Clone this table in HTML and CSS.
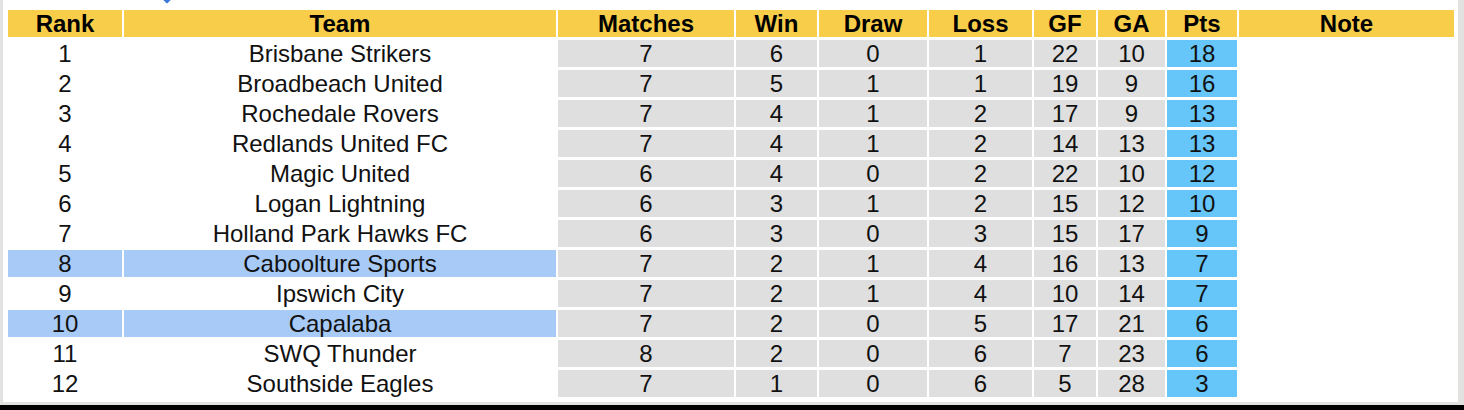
FILE: index.html
```html
<!DOCTYPE html>
<html>
<head>
<meta charset="utf-8">
<link rel="stylesheet" href="styles.css">
</head>
<body>
<div class="frame">
  <span class="marker"></span>
  <table class="standings">
    <colgroup>
      <col class="c-rank"><col class="c-team"><col class="c-m"><col class="c-w"><col class="c-d"><col class="c-l"><col class="c-gf"><col class="c-ga"><col class="c-pts"><col class="c-note">
    </colgroup>
    <thead>
      <tr><th>Rank</th><th>Team</th><th>Matches</th><th>Win</th><th>Draw</th><th>Loss</th><th>GF</th><th>GA</th><th>Pts</th><th>Note</th></tr>
    </thead>
    <tbody>
      <tr><td>1</td><td>Brisbane Strikers</td><td class="g">7</td><td class="g">6</td><td class="g">0</td><td class="g">1</td><td class="g">22</td><td class="g">10</td><td class="p">18</td><td></td></tr>
      <tr><td>2</td><td>Broadbeach United</td><td class="g">7</td><td class="g">5</td><td class="g">1</td><td class="g">1</td><td class="g">19</td><td class="g">9</td><td class="p">16</td><td></td></tr>
      <tr><td>3</td><td>Rochedale Rovers</td><td class="g">7</td><td class="g">4</td><td class="g">1</td><td class="g">2</td><td class="g">17</td><td class="g">9</td><td class="p">13</td><td></td></tr>
      <tr><td>4</td><td>Redlands United FC</td><td class="g">7</td><td class="g">4</td><td class="g">1</td><td class="g">2</td><td class="g">14</td><td class="g">13</td><td class="p">13</td><td></td></tr>
      <tr><td>5</td><td>Magic United</td><td class="g">6</td><td class="g">4</td><td class="g">0</td><td class="g">2</td><td class="g">22</td><td class="g">10</td><td class="p">12</td><td></td></tr>
      <tr><td>6</td><td>Logan Lightning</td><td class="g">6</td><td class="g">3</td><td class="g">1</td><td class="g">2</td><td class="g">15</td><td class="g">12</td><td class="p">10</td><td></td></tr>
      <tr><td>7</td><td>Holland Park Hawks FC</td><td class="g">6</td><td class="g">3</td><td class="g">0</td><td class="g">3</td><td class="g">15</td><td class="g">17</td><td class="p">9</td><td></td></tr>
      <tr class="hl"><td>8</td><td>Caboolture Sports</td><td class="g">7</td><td class="g">2</td><td class="g">1</td><td class="g">4</td><td class="g">16</td><td class="g">13</td><td class="p">7</td><td class="note"></td></tr>
      <tr><td>9</td><td>Ipswich City</td><td class="g">7</td><td class="g">2</td><td class="g">1</td><td class="g">4</td><td class="g">10</td><td class="g">14</td><td class="p">7</td><td></td></tr>
      <tr class="hl"><td>10</td><td>Capalaba</td><td class="g">7</td><td class="g">2</td><td class="g">0</td><td class="g">5</td><td class="g">17</td><td class="g">21</td><td class="p">6</td><td class="note"></td></tr>
      <tr><td>11</td><td>SWQ Thunder</td><td class="g">8</td><td class="g">2</td><td class="g">0</td><td class="g">6</td><td class="g">7</td><td class="g">23</td><td class="p">6</td><td></td></tr>
      <tr><td>12</td><td>Southside Eagles</td><td class="g">7</td><td class="g">1</td><td class="g">0</td><td class="g">6</td><td class="g">5</td><td class="g">28</td><td class="p">3</td><td></td></tr>
    </tbody>
  </table>
</div>
<div class="blackbar"></div>
</body>
</html>
```

FILE: styles.css
```css
html, body {
  margin: 0;
  padding: 0;
  background: #ffffff;
}

.frame {
  position: relative;
  width: 1450px;
  height: 395px;
  padding: 7px 2px 0 3px;
  border-left: 3px solid #e2e2e0;
  border-right: 6px solid #e2e2e0;
  border-bottom: 3px solid #e2e2e0;
  background: #ffffff;
}

.marker {
  position: absolute;
  left: 160px;
  top: -6px;
  width: 8px;
  height: 8px;
  background: #3c78d8;
  transform: rotate(45deg);
  border-radius: 1px;
}

.blackbar {
  height: 5px;
  background: #000000;
}

.standings {
  table-layout: fixed;
  width: 1450px;
  border-collapse: separate;
  border-spacing: 2px 3px;
  font-family: "Liberation Sans", Arial, sans-serif;
  font-size: 24px;
  color: #111111;
}

.c-rank { width: 114px; }
.c-team { width: 432px; }
.c-m { width: 176px; }
.c-w { width: 81px; }
.c-d { width: 108px; }
.c-l { width: 103px; }
.c-gf { width: 62px; }
.c-ga { width: 67px; }
.c-pts { width: 70px; }
.c-note { width: 215px; }

.standings th,
.standings td {
  height: 27px;
  padding: 0;
  text-align: center;
  vertical-align: middle;
  line-height: 27px;
  white-space: nowrap;
  overflow: hidden;
}

.standings th {
  background: #f8cd49;
  font-weight: bold;
  color: #000000;
}

.standings td.g {
  background: #dfdfdf;
}

.standings td.p {
  background: #66c6f9;
}

.standings tr.hl td {
  background: #a8caf7;
}

.standings tr.hl td.g {
  background: #dfdfdf;
}

.standings tr.hl td.p {
  background: #66c6f9;
}

.standings tr.hl td.note {
  background: #ffffff;
}
```
